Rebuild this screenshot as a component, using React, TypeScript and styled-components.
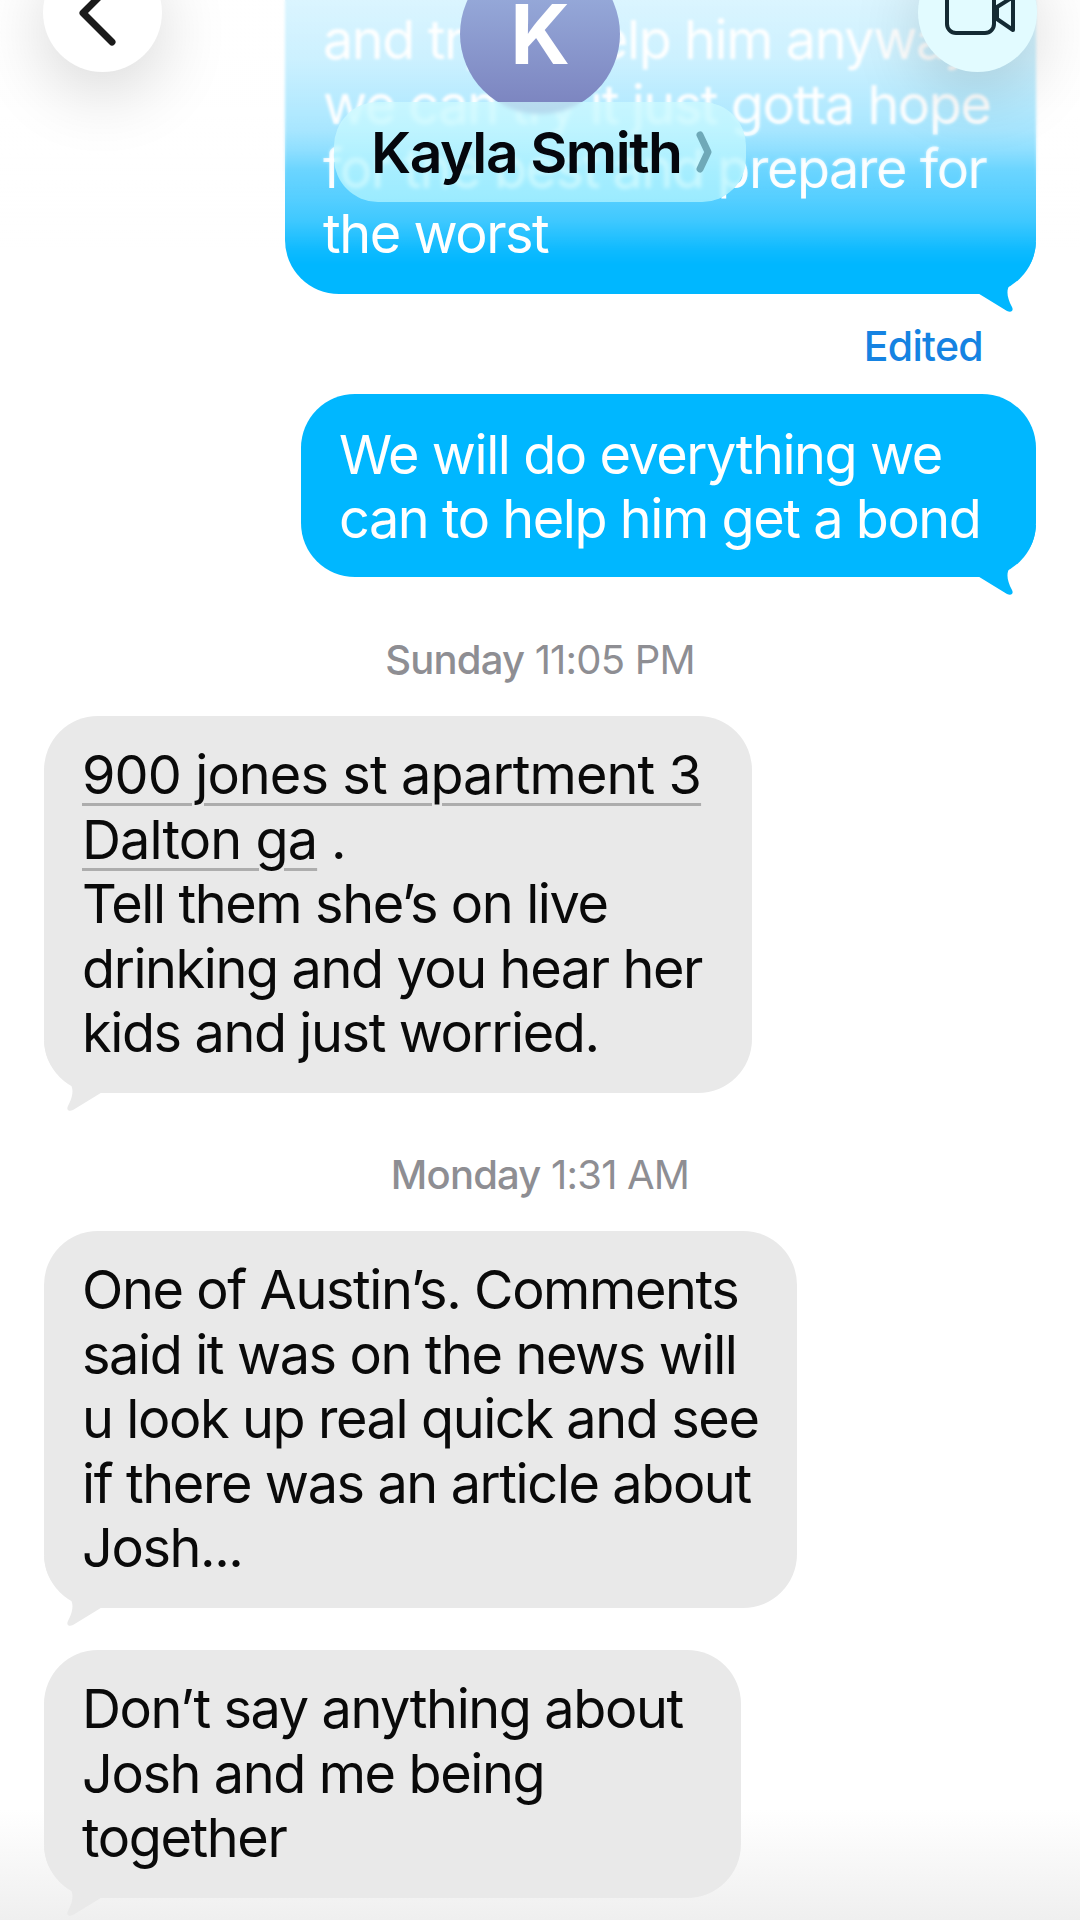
import styled, { createGlobalStyle } from 'styled-components';

const Global = createGlobalStyle`
  html, body { margin: 0; padding: 0; background: #fff; }
  body { font-family: Inter, "Liberation Sans", sans-serif; }
`;

const Page = styled.div`
  position: relative;
  width: 1080px;
  height: 1920px;
  overflow: hidden;
  background: #fff;
`;

const Thread = styled.div`
  position: relative;
  display: flex;
  flex-direction: column;
  margin-top: -85px;
  padding: 0 44px;
`;

const Bubble = styled.div<{ $me?: boolean; $width: number; $top?: number; $bottom?: number; $gap?: number }>`
  position: relative;
  isolation: isolate;
  box-sizing: border-box;
  width: ${(p) => p.$width}px;
  align-self: ${(p) => (p.$me ? 'flex-end' : 'flex-start')};
  margin-top: ${(p) => p.$gap ?? 0}px;
  padding: ${(p) => p.$top ?? 27}px 0 ${(p) => p.$bottom ?? 27.5}px 38px;
  border-radius: 54px;
  background: ${(p) => (p.$me ? '#00b7ff' : '#e9e9e9')};
  color: ${(p) => (p.$me ? '#fff' : '#0a0a0a')};
  font-size: 54px;
  line-height: 64.5px;
  letter-spacing: ${(p) => (p.$me ? '-1.45px' : '-1.4px')};
  white-space: nowrap;
`;

const TailSvg = styled.svg<{ $me?: boolean }>`
  position: absolute;
  z-index: -1;
  bottom: -20px;
  ${(p) => (p.$me ? 'right: 0;' : 'left: 0;')}
  transform: ${(p) => (p.$me ? 'none' : 'scaleX(-1)')};
  fill: ${(p) => (p.$me ? '#00b7ff' : '#e9e9e9')};
`;

const Stamp = styled.div<{ $top: number }>`
  margin: ${(p) => p.$top}px 0 34px;
  text-align: center;
  font-size: 40px;
  line-height: 44px;
  letter-spacing: -0.8px;
  color: #8e8e93;
`;

const Day = styled.span`
  font-weight: 500;
`;

const Edited = styled.div`
  align-self: flex-end;
  margin: 30px 53px 26px 0;
  font-size: 41px;
  line-height: 44px;
  font-weight: 500;
  letter-spacing: -0.7px;
  color: #1583e2;
`;

const Link = styled.span`
  letter-spacing: -0.9px;
  text-decoration: underline;
  text-decoration-color: #adadad;
  text-decoration-thickness: 3px;
  text-underline-offset: 9px;
`;

const TopFade = styled.div`
  position: absolute;
  top: 0;
  left: 0;
  right: 0;
  height: 265px;
  background: linear-gradient(
    to bottom,
    rgba(255, 255, 255, 0.86) 0,
    rgba(255, 255, 255, 0.8) 60px,
    rgba(255, 255, 255, 0.72) 100px,
    rgba(255, 255, 255, 0.66) 130px,
    rgba(255, 255, 255, 0.56) 150px,
    rgba(255, 255, 255, 0.42) 170px,
    rgba(255, 255, 255, 0.33) 200px,
    rgba(255, 255, 255, 0.25) 220px,
    rgba(255, 255, 255, 0.06) 250px,
    rgba(255, 255, 255, 0) 265px
  );
`;

const TopBlur = styled.div`
  position: absolute;
  top: 0;
  left: 0;
  right: 0;
  height: 190px;
  backdrop-filter: blur(1.5px);
  mask-image: linear-gradient(to bottom, #000 60%, transparent);
`;

const BottomFade = styled.div`
  position: absolute;
  left: 0;
  right: 0;
  bottom: 0;
  height: 110px;
  background: linear-gradient(to bottom, #fff, #efefef);
`;

const Header = styled.header`
  position: absolute;
  top: -47px;
  left: 0;
  right: 0;
  display: flex;
  justify-content: space-between;
  align-items: flex-start;
  padding: 0 43px;
`;

const RoundButton = styled.div<{ $tint?: boolean }>`
  display: flex;
  align-items: center;
  justify-content: center;
  width: 119px;
  height: 119px;
  border-radius: 50%;
  background: ${(p) => (p.$tint ? '#e2fbff' : '#fff')};
  box-shadow: 0 20px 70px rgba(0, 0, 0, 0.16);
`;

const BackIcon = styled.svg`
  margin-right: 10px;
`;

const Contact = styled.div`
  display: flex;
  flex-direction: column;
  align-items: center;
  padding-top: 1px;
`;

const Avatar = styled.div`
  display: flex;
  align-items: center;
  justify-content: center;
  width: 160px;
  height: 160px;
  border-radius: 50%;
  background: linear-gradient(to bottom, #9fb6e2, #7a82be);
  color: #fff;
  font-size: 83px;
  font-weight: 700;
`;

const NamePill = styled.div`
  display: flex;
  align-items: center;
  gap: 14px;
  box-sizing: border-box;
  width: 412px;
  height: 100px;
  margin-top: -12px;
  padding: 0 0 0 37px;
  border-radius: 44px;
  background: linear-gradient(to bottom, rgba(205, 250, 255, 0.74), rgba(180, 245, 255, 0.74));
  backdrop-filter: blur(2px);
  color: #05070d;
  font-size: 57px;
  font-weight: 600;
  letter-spacing: -1.4px;
  white-space: nowrap;
`;

const Tail = ({ me }: { me?: boolean }) => (
  <TailSvg $me={me} width="70" height="72" viewBox="0 0 70 72">
    <path d="M70 0C69 18 62 28 52 35C41 42 38 50 46 65C48 69 45 71 41 69L10 50H0V0Z" />
  </TailSvg>
);

export default function App() {
  return (
    <Page>
      <Global />
      <BottomFade />
      <Thread>
        <Bubble $me $width={751} $top={93}>
          and try to help him anyway,<br />
          we can try it just gotta hope<br />
          for the best and prepare for<br />
          the worst
          <Tail me />
        </Bubble>
        <Edited>Edited</Edited>
        <Bubble $me $width={735} $top={29} $bottom={25.5}>
          We will do everything we<br />
          can to help him get a bond
          <Tail me />
        </Bubble>
        <Stamp $top={61}><Day>Sunday</Day> 11:05 PM</Stamp>
        <Bubble $width={708}>
          <Link>900 jones st apartment 3</Link><br />
          <Link>Dalton ga</Link> .<br />
          Tell them she’s on live<br />
          drinking and you hear her<br />
          kids and just worried.
          <Tail />
        </Bubble>
        <Stamp $top={60}><Day>Monday</Day> 1:31 AM</Stamp>
        <Bubble $width={753}>
          One of Austin’s. Comments<br />
          said it was on the news will<br />
          u look up real quick and see<br />
          if there was an article about<br />
          Josh...
          <Tail />
        </Bubble>
        <Bubble $width={697} $gap={42}>
          Don’t say anything about<br />
          Josh and me being<br />
          together
          <Tail />
        </Bubble>
      </Thread>
      <TopBlur />
      <TopFade />
      <Header>
        <RoundButton>
          <BackIcon width="44" height="72" viewBox="0 0 44 72" fill="none" stroke="#1a1a1a" strokeWidth="7" strokeLinecap="round" strokeLinejoin="round">
            <path d="M36 7L7 36L36 65" />
          </BackIcon>
        </RoundButton>
        <Contact>
          <Avatar>K</Avatar>
          <NamePill>
            Kayla Smith
            <svg width="16" height="42" viewBox="0 0 16 42" fill="none" stroke="#6fa9b8" strokeWidth="7" strokeLinecap="round" strokeLinejoin="round">
              <path d="M4 4L12 21L4 38" />
            </svg>
          </NamePill>
        </Contact>
        <RoundButton $tint>
          <svg width="80" height="80" viewBox="0 0 80 80" fill="none" stroke="#142a33" strokeWidth="4" strokeLinejoin="round">
            <rect x="9" y="13" width="47" height="47" rx="9" />
            <path d="M59 34L75 24V57L59 46Z" />
          </svg>
        </RoundButton>
      </Header>
    </Page>
  );
}
